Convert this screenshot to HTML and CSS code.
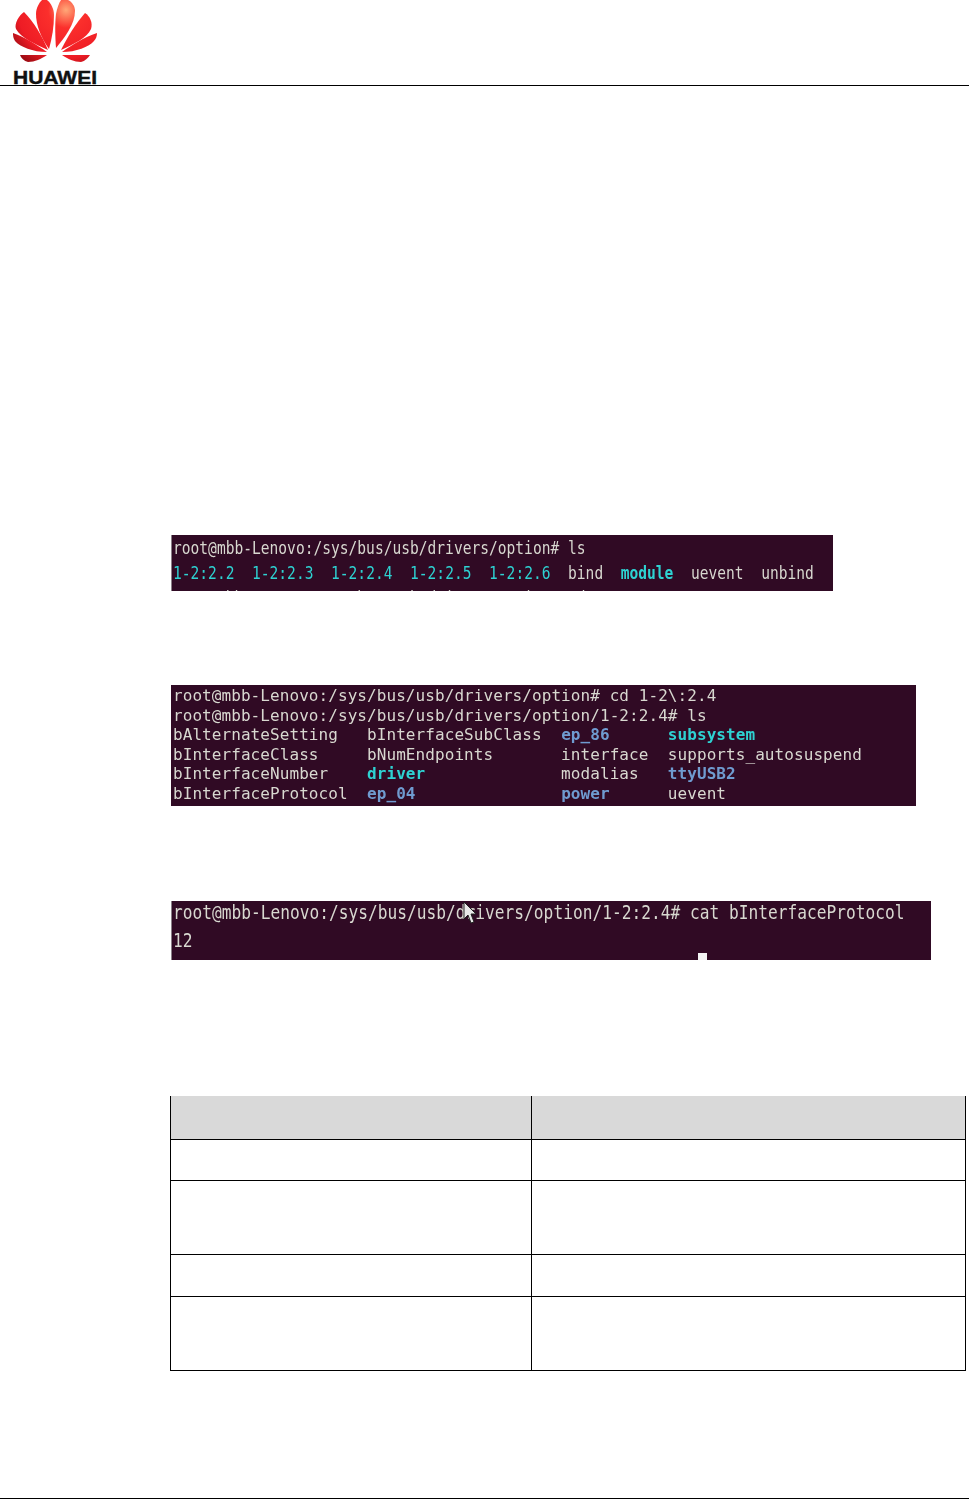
FILE: index.html
```html
<!DOCTYPE html>
<html lang="en">
<head>
<meta charset="utf-8">
<title>HUAWEI document page</title>
<link rel="stylesheet" href="styles.css">
</head>
<body>
<header class="page-header">
  <svg class="logo" viewBox="0 0 110 85" width="110" height="85" aria-label="HUAWEI">
    <defs>
      <radialGradient id="petal" gradientUnits="userSpaceOnUse" cx="66" cy="10" r="64">
        <stop offset="0" stop-color="#ffa878"/>
        <stop offset=".28" stop-color="#fb2f2c"/>
        <stop offset=".75" stop-color="#ee1c25"/>
        <stop offset="1" stop-color="#a00c14"/>
      </radialGradient>
    </defs>
    <g fill="url(#petal)">
      <path d="M49 49C41 38 36 25 36 14C36 8 39 3 42 0L47 0C51 3 54 9 54 15C54 27 52 38 49 49Z"/>
      <path d="M56 48C55 36 55 22 56 14C57 8 59 3 61 0L68 0C72 2 75 6 75 11C75 24 65 37 56 48Z"/>
      <path d="M48 50C35 44 21 38 16 29C14 24 19 15 24 12C34 22 42 36 48 50Z"/>
      <path d="M61 50C68 36 76 23 85 13C90 16 93 23 91 29C87 38 74 44 61 50Z"/>
      <path d="M47 52C33 52 20 47 15 41C13 38 13 35 13 33C25 37 37 45 47 52Z"/>
      <path d="M62 52C72 45 84 37 97 33C97 36 96 39 94 41C89 47 76 52 62 52Z"/>
      <path d="M20 55L47 55C41 59 35 62 28 62C24 61 21 58 20 55Z"/>
      <path d="M62 55L90 55C88 58 85 61 81 62C74 62 68 59 62 55Z"/>
    </g>
    <text class="logo-text" x="13" y="84" textLength="84" lengthAdjust="spacingAndGlyphs">HUAWEI</text>
  </svg>
</header>

<main class="content">
  <section class="term term-one">
    <div class="term-inner">
      <div>root@mbb-Lenovo:/sys/bus/usb/drivers/option# ls</div>
      <div><span class="cyan">1-2:2.2</span>  <span class="cyan">1-2:2.3</span>  <span class="cyan">1-2:2.4</span>  <span class="cyan">1-2:2.5</span>  <span class="cyan">1-2:2.6</span>  bind  <b class="cyan">module</b>  uevent  unbind</div>
      <div>root@mbb-Lenovo:/sys/bus/usb/drivers/option# cd 1-2:2.4</div>
    </div>
  </section>

  <section class="term term-two">
    <div class="term-inner">
      <div>root@mbb-Lenovo:/sys/bus/usb/drivers/option# cd 1-2\:2.4</div>
      <div>root@mbb-Lenovo:/sys/bus/usb/drivers/option/1-2:2.4# ls</div>
      <div>bAlternateSetting   bInterfaceSubClass  <b class="blue">ep_86</b>      <b class="cyan">subsystem</b></div>
      <div>bInterfaceClass     bNumEndpoints       interface  supports_autosuspend</div>
      <div>bInterfaceNumber    <b class="cyan">driver</b>              modalias   <b class="blue">ttyUSB2</b></div>
      <div>bInterfaceProtocol  <b class="blue">ep_04</b>               <b class="blue">power</b>      uevent</div>
      <div>root@mbb-Lenovo:/sys/bus/usb/drivers/option/1-2:2.4#</div>
    </div>
  </section>

  <section class="term term-three">
    <div class="term-inner">
      <div>root@mbb-Lenovo:/sys/bus/usb/drivers/option/1-2:2.4# cat bInterfaceProtocol</div>
      <div>12</div>
      <div>root@mbb-Lenovo:/sys/bus/usb/drivers/option/1-2:2.4#</div>
    </div>
    <span class="cursor"></span>
    <svg class="pointer" viewBox="0 0 14 24" width="14" height="24">
      <path d="M1 0L1 17L5 13L8 21L11 20L8 12L13 12Z" fill="#e8e8e8" stroke="#222" stroke-width="1"/>
    </svg>
  </section>

  <table class="data-table">
    <tr class="row-head"><th></th><th></th></tr>
    <tr class="row-short"><td></td><td></td></tr>
    <tr class="row-tall"><td></td><td></td></tr>
    <tr class="row-mid"><td></td><td></td></tr>
    <tr class="row-tall"><td></td><td></td></tr>
  </table>
</main>

<footer class="page-footer"></footer>
</body>
</html>
```

FILE: styles.css
```css
html, body {
  margin: 0;
  padding: 0;
  background: #fff;
}

body {
  width: 969px;
  height: 1499px;
  display: flex;
  flex-direction: column;
  overflow: hidden;
  font-family: "Liberation Sans", Arial, sans-serif;
}

.page-header {
  height: 85px;
  border-bottom: 1px solid #000;
  flex: none;
}

.logo {
  display: block;
}

.logo-text {
  font-family: "Liberation Sans", Arial, sans-serif;
  font-weight: 700;
  font-size: 18px;
  fill: #111;
  stroke: #111;
  stroke-width: 0.4px;
}

.content {
  flex: 1;
  padding-left: 170px;
  display: flex;
  flex-direction: column;
  align-items: flex-start;
}

.page-footer {
  flex: none;
  height: 1px;
  background: #000;
}

.term {
  position: relative;
  margin-left: 1px;
  background: #300a24;
  overflow: hidden;
  color: #d8d8d0;
  font-family: "DejaVu Sans Mono", "Liberation Mono", monospace;
  box-sizing: border-box;
}

.term-inner {
  transform-origin: 0 0;
  filter: blur(0.35px);
}

.term-inner div {
  white-space: pre;
}

.term b {
  font-weight: 700;
}

.cyan {
  color: #2ed2d2;
}

.blue {
  color: #6f9bd0;
}

.term-one {
  width: 662px;
  height: 56px;
  margin-top: 449px;
  border-left: 1px solid #8a7f88;
  padding: 0 0 0 1px;
}

.term-one .term-inner {
  font-size: 18px;
  line-height: 25px;
  transform: scaleX(0.81);
}

.term-two {
  width: 745px;
  height: 121px;
  margin-top: 94px;
  padding-left: 2px;
}

.term-two .term-inner {
  font-size: 16px;
  line-height: 19.5px;
  letter-spacing: 0.07px;
  padding-top: 1px;
}

.term-three {
  width: 760px;
  height: 59px;
  margin-top: 95px;
  border-left: 1px solid #8a7f88;
  padding-left: 1px;
}

.term-three .term-inner {
  font-size: 20px;
  line-height: 28px;
  transform: scaleX(0.81);
  margin-top: -3px;
}

.cursor {
  position: absolute;
  left: 526px;
  top: 52px;
  width: 9px;
  height: 7px;
  background: #f4f4f4;
}

.pointer {
  position: absolute;
  left: 291px;
  top: 1px;
}

.data-table {
  margin-top: 136px;
  width: 796px;
  table-layout: fixed;
  border-collapse: collapse;
}

.data-table th,
.data-table td {
  border: 1px solid #000;
  padding: 0;
}

.data-table th:first-child,
.data-table td:first-child {
  width: 360px;
}

.data-table th {
  background: #d9d9d9;
  border-top: none;
}

.row-head {
  height: 43px;
}

.row-short {
  height: 41px;
}

.row-mid {
  height: 42px;
}

.row-tall {
  height: 74px;
}
```
